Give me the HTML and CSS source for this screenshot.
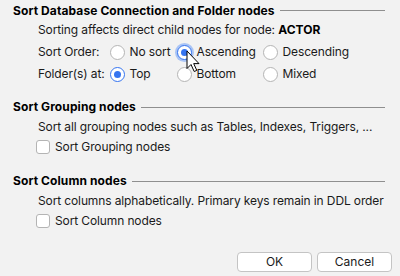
FILE: index.html
```html
<!DOCTYPE html>
<html>
<head>
<meta charset="utf-8">
<link rel="stylesheet" href="styles.css">
</head>
<body>
<div class="dialog">
  <section class="group first">
    <div class="title"><span>Sort Database Connection and Folder nodes</span><span class="rule"></span></div>
    <div class="content">
      <div class="desc">Sorting affects direct child nodes for node: <b>ACTOR</b></div>
      <div class="grid">
        <div class="lbl">Sort Order:</div>
        <div class="opt"><span class="radio"></span>No sort</div>
        <div class="opt"><span class="radio checked focus"></span>Ascending</div>
        <div class="opt"><span class="radio"></span>Descending</div>
        <div class="lbl">Folder(s) at:</div>
        <div class="opt"><span class="radio checked"></span>Top</div>
        <div class="opt"><span class="radio"></span>Bottom</div>
        <div class="opt"><span class="radio"></span>Mixed</div>
      </div>
    </div>
  </section>
  <section class="group">
    <div class="title"><span>Sort Grouping nodes</span><span class="rule"></span></div>
    <div class="content">
      <div class="desc">Sort all grouping nodes such as Tables, Indexes, Triggers, ...</div>
      <div class="check"><span class="box"></span>Sort Grouping nodes</div>
    </div>
  </section>
  <section class="group last">
    <div class="title"><span>Sort Column nodes</span><span class="rule"></span></div>
    <div class="content">
      <div class="desc">Sort columns alphabetically. Primary keys remain in DDL order</div>
      <div class="check"><span class="box"></span>Sort Column nodes</div>
    </div>
  </section>
  <div class="buttons">
    <button class="btn">OK</button>
    <button class="btn">Cancel</button>
  </div>
  <svg class="cursor" width="14" height="23" viewBox="0 0 14 23">
    <path d="M1 1 V18.5 L5 14.5 L8.2 21.5 L10.8 20.4 L7.7 13.6 H13 Z" fill="#fff" stroke="#000" stroke-width="1" stroke-linejoin="miter"/>
  </svg>
</div>
</body>
</html>
```
FILE: styles.css
```css
html, body {
  margin: 0;
  padding: 0;
  background: #f2f2f2;
}
body {
  font-family: Inter, "Noto Sans", sans-serif;
  font-size: 12px;
  line-height: 16px;
  color: #1a1a1a;
}
.dialog {
  position: relative;
  width: 400px;
  height: 276px;
  box-sizing: border-box;
  padding: 2.5px 15px 0 13px;
}
.group {
  margin-top: 14px;
}
.group.first {
  margin-top: 0;
}
.group.last {
  margin-top: 16px;
}
.title {
  display: flex;
  align-items: center;
  font-weight: 700;
  color: #000;
  letter-spacing: 0.1px;
}
.rule {
  flex: 1;
  height: 1px;
  background: #8f8f8f;
  margin-left: 5px;
}
.content {
  padding-left: 25px;
  letter-spacing: -0.12px;
}
.desc {
  margin-top: 3.5px;
  white-space: nowrap;
}
.desc b {
  color: #000;
  letter-spacing: 0;
}
.grid {
  display: grid;
  grid-template-columns: 72px 67px 86px auto;
  grid-auto-rows: 22px;
  margin-top: 3px;
}
.lbl, .opt {
  display: flex;
  align-items: center;
  white-space: nowrap;
}
.radio {
  position: relative;
  width: 13px;
  height: 13px;
  border: 1px solid #b4b4b4;
  border-radius: 50%;
  background: #fff;
  margin-right: 4.5px;
  flex: none;
}
.radio.checked {
  border-color: #3574f0;
}
.radio.checked::after {
  content: "";
  position: absolute;
  left: 3px;
  top: 3px;
  width: 7px;
  height: 7px;
  border-radius: 50%;
  background: #3574f0;
}
.radio.focus {
  box-shadow: 0 0 0 2px #a9c4f5;
}
.check {
  display: flex;
  align-items: center;
  height: 20px;
  margin-top: 2.5px;
  white-space: nowrap;
}
.box {
  width: 12px;
  height: 12px;
  border: 1px solid #b4b4b4;
  border-radius: 3px;
  background: #fff;
  margin-right: 5px;
  margin-left: -2px;
}
.buttons {
  display: flex;
  justify-content: flex-end;
  gap: 5px;
  margin-top: 20.5px;
  margin-right: -7px;
}
.btn {
  width: 75px;
  height: 20px;
  box-sizing: border-box;
  border: 1px solid #c4c4c4;
  border-radius: 4px;
  background: #fff;
  font-family: Inter, "Noto Sans", sans-serif;
  font-size: 12px;
  color: #1a1a1a;
  padding: 0;
  line-height: 18px;
}
.cursor {
  position: absolute;
  left: 186px;
  top: 50px;
}
```
